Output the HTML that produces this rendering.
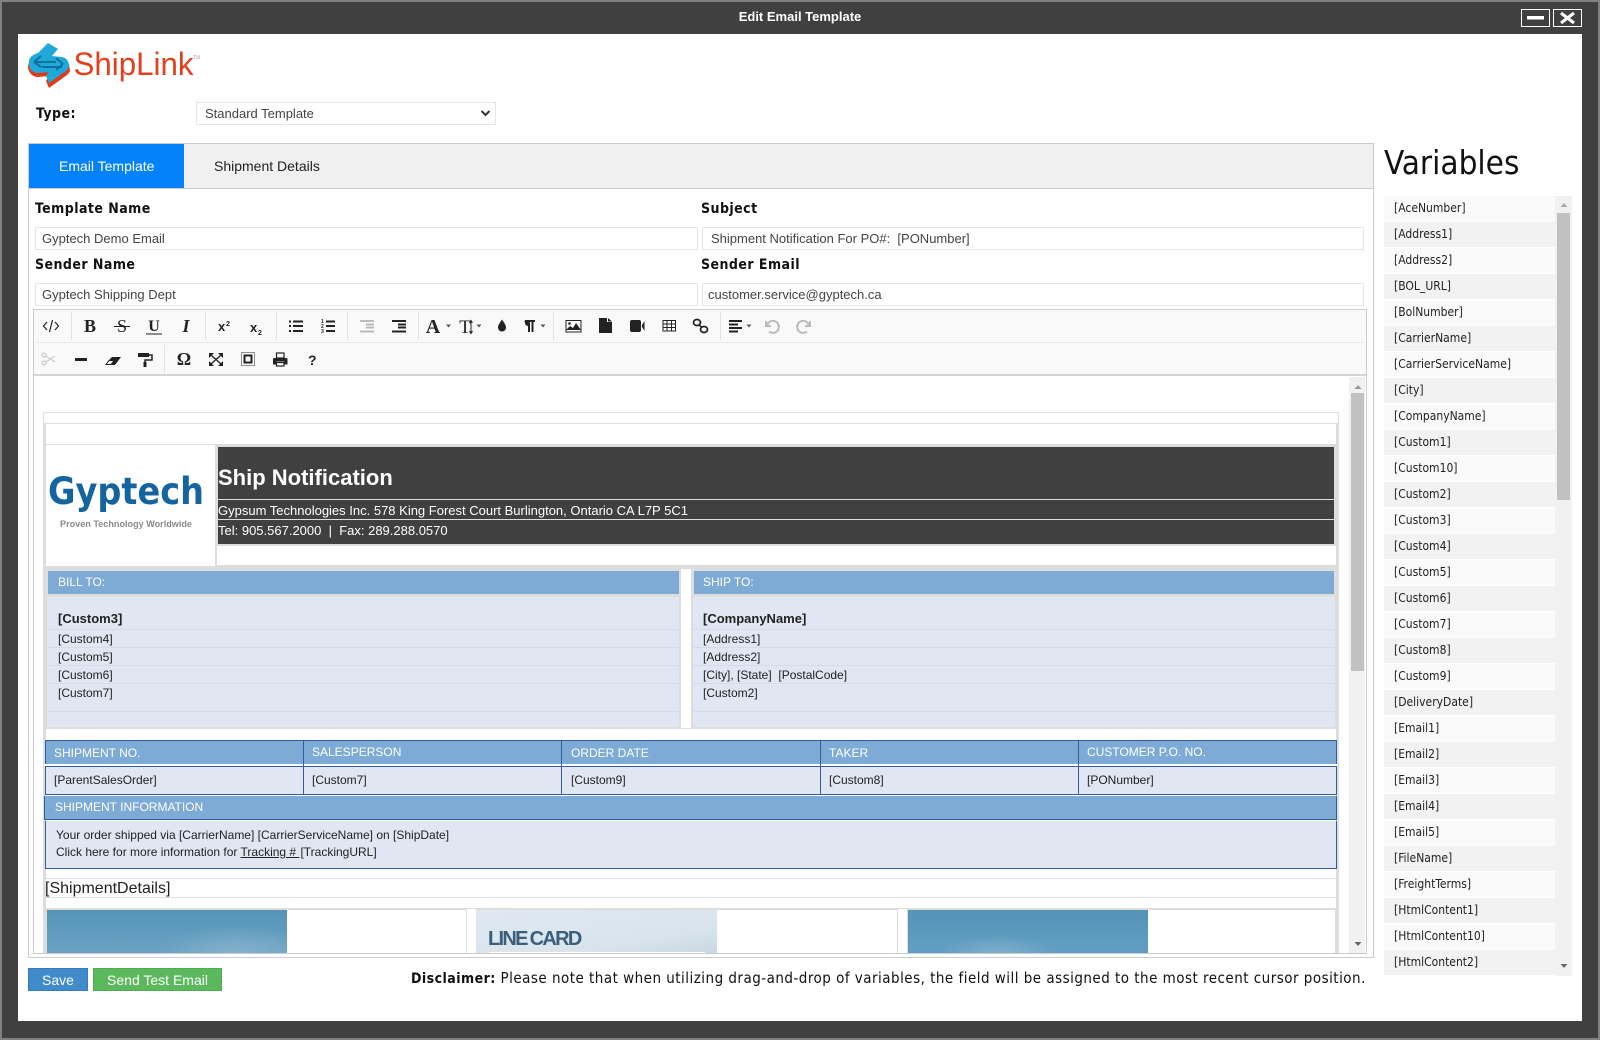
<!DOCTYPE html>
<html><head><meta charset="utf-8"><title>Edit Email Template</title>
<style>
html,body{margin:0;padding:0;width:1600px;height:1040px;overflow:hidden;background:#404040;font-family:"Liberation Sans",Arial,sans-serif;color:#222}
.a{position:absolute;box-sizing:border-box}
.t{position:absolute;white-space:nowrap;line-height:16px}
.lab{position:absolute;white-space:nowrap;font:bold 14px/18px "DejaVu Sans Condensed","DejaVu Sans",sans-serif;font-stretch:condensed;color:#111;letter-spacing:.45px}
.inp{position:absolute;box-sizing:border-box;height:23px;border:1px solid #e6e6e6;background:#fff;font-size:13px;line-height:21px;color:#444;white-space:nowrap}
.g{background:#ddd}.lb{background:#e0e7f2}.bh{background:#7dabd6}
.w{color:#fff}
.s{font-size:12px;color:#222}
.v{position:absolute;box-sizing:border-box;left:1384px;width:171px;height:25px;font:12px/25px "DejaVu Sans Condensed","DejaVu Sans",sans-serif;font-stretch:condensed;color:#222;padding-left:10px;white-space:nowrap}
</style></head><body>
<div class="a" style="left:0;top:0;width:1600px;height:1040px;border:2px solid #808080;background:#404040"></div>
<div class="t" style="left:600px;width:400px;text-align:center;top:9px;color:#fff;font-weight:bold;font-size:13px">Edit Email Template</div>
<svg class="a" style="left:1521px;top:9px" width="62" height="18"><rect x=".5" y=".5" width="28" height="17" fill="none" stroke="#fff"/><rect x="6" y="7" width="17" height="3.5" fill="#fff"/><rect x="32.5" y=".5" width="28" height="17" fill="none" stroke="#fff"/><path d="M40 4l13 10M53 4L40 14" stroke="#fff" stroke-width="3"/></svg>
<div class="a" style="left:18px;top:34px;width:1564px;height:987px;background:#fff"></div>

<svg class="a" style="left:26px;top:40px" width="180" height="52">
<path d="M2 26C2 32 6 37 12 37L23 36L20 41L23 48L41 35C43 33 44 32 44 30L43 24L3 22Z" fill="#e0391c"/>
<path d="M3 21C3 17 8 14 12 13L22 3L32 9L26 16L36 17C41 18 43 22 43 26C43 28 41 30 40 31L23 43L20 36L23 32L12 33C6 33 2 28 3 21Z" fill="#1fa9d8"/>
<path d="M8 22L15 16M8 22L15 27M8 22H30M37 24L30 18M37 24L30 30M16 27H36" fill="none" stroke="#0f6f9e" stroke-width="2"/>
<text x="47.500" y="35" font-family="Liberation Sans" font-size="32" fill="#e2401f" textLength="120" lengthAdjust="spacingAndGlyphs">ShipLink</text>
<text x="167" y="19" font-family="Liberation Sans" font-size="5" fill="#c99">TM</text>
</svg>

<div class="lab" style="left:36px;top:105px">Type:</div>
<div class="a" style="left:196px;top:102px;width:300px;height:23px;border:1px solid #e6e6e6;background:#fff"></div>
<div class="t" style="left:205px;top:106px;font-size:13px;color:#444">Standard Template</div>
<svg class="a" style="left:480px;top:109px" width="12" height="9"><path d="M1.5 2l4 4 4-4" fill="none" stroke="#333" stroke-width="2"/></svg>

<div class="a" style="left:28px;top:143px;width:1346px;height:815px;border:1px solid #ccc;background:#fff"></div>
<div class="a" style="left:29px;top:144px;width:1344px;height:45px;background:#f0f0f0;border-bottom:1px solid #ccc"></div>
<div class="a" style="left:29px;top:144px;width:155px;height:44px;background:#0482fb"></div>
<div class="t w" style="left:59px;top:158px;font-size:14px">Email Template</div>
<div class="t" style="left:214px;top:158px;font-size:14px;color:#222">Shipment Details</div>

<div class="lab" style="left:35px;top:200px">Template Name</div>
<div class="lab" style="left:701px;top:200px">Subject</div>
<div class="inp" style="left:35px;top:227px;width:663px;padding-left:6px">Gyptech Demo Email</div>
<div class="inp" style="left:702px;top:227px;width:662px;padding-left:8px">Shipment Notification For PO#:&nbsp; [PONumber]</div>
<div class="lab" style="left:35px;top:256px">Sender Name</div>
<div class="lab" style="left:701px;top:256px">Sender Email</div>
<div class="inp" style="left:35px;top:283px;width:663px;padding-left:6px">Gyptech Shipping Dept</div>
<div class="inp" style="left:702px;top:283px;width:662px;padding-left:5px">customer.service@gyptech.ca</div>

<!-- editor -->
<div class="a" style="left:33px;top:309px;width:1334px;height:645px;border:1px solid #ccc;background:#fff"></div>
<div class="a" style="left:34px;top:310px;width:1332px;height:66px;background:#f9f9f9;border-bottom:2px solid #d4d4d4"></div>
<div class="a" style="left:36px;top:342px;width:1328px;height:1px;background:#e8e8e8"></div>
<svg class="a" style="left:0;top:300px;overflow:visible" width="1000" height="80" viewBox="0 300 1000 80">
<g stroke="#e2e2e2" stroke-width="1"><path d="M71.500 312V340M205.500 312V340M276.500 312V340M347.500 312V340M418.500 312V340M553.500 312V340M720.500 312V340M164.500 345V373"/></g>
<g font-family="Liberation Serif" font-weight="bold" fill="#222" text-anchor="middle">
<text x="90" y="332" font-size="18">B</text>
<text x="122" y="332" font-size="18" font-weight="normal">S</text>
<text x="154" y="331" font-size="16">U</text>
<text x="186" y="332" font-size="18" font-style="italic">I</text>
<text x="433" y="333" font-size="20">A</text>
<text x="465" y="333" font-size="19" font-weight="normal">T</text>
<text x="184" y="365" font-size="18">Ω</text>
</g>
<path d="M114 326.500H130M146 334H162" stroke="#222" stroke-width="1"/>
<g font-family="Liberation Sans" font-weight="bold" fill="#222">
<text x="218" y="331" font-size="13">x</text><text x="226" y="326" font-size="7">2</text>
<text x="250" y="332" font-size="13">x</text><text x="258" y="335" font-size="7">2</text>
<text x="308" y="365" font-size="14">?</text>
<text x="321" y="323" font-size="5">1</text><text x="321" y="328" font-size="5">2</text><text x="321" y="333" font-size="5">3</text>
</g>
<g fill="none" stroke="#222">
<path d="M47 322l-3.500 4 3.500 4M55 322l3.500 4-3.500 4M52.500 320l-3 12" stroke-width="1.200"/>
<path d="M289 321.500h2M289 326h2M289 331h2M293 321.500h10M293 326h10M293 331h10" stroke-width="2"/>
<path d="M326 321.500h9M326 326h9M326 331h9" stroke-width="2"/>
<path d="M360 321h14M366 324.500h8M366 327.500h8M360 331.500h14" stroke="#bbb" stroke-width="2"/>
<path d="M392 321h14M398 324.500h8M398 327.500h8M392 331.500h14" stroke-width="2"/>
<path d="M471 321v12M469.500 323l1.500-2.500 1.500 2.500M469.500 331l1.500 2.500 1.500-2.500" stroke-width="1"/>
<path d="M729 321h13M729 324.500h9M729 328h13M729 331.500h9" stroke-width="2"/>
<path d="M766 321v5h5M767 325.500a6 6 0 1 1 2 6" stroke="#bbb" stroke-width="2"/>
<path d="M810 321v5h-5M809 325.500a6 6 0 1 0-2 6" stroke="#bbb" stroke-width="2"/>
<rect x="566" y="320.500" width="15" height="11.500" stroke-width="1"/>
<rect x="663" y="320.500" width="12.500" height="10.500" stroke-width="1"/><path d="M663 324h13M663 327.500h13M667 320.500v10.500M671.500 320.500v10.500" stroke-width="1"/>
<ellipse cx="697" cy="322.500" rx="3.500" ry="3" stroke-width="1.700"/><ellipse cx="704" cy="329.500" rx="3.500" ry="3" stroke-width="1.700"/><path d="M699 325l3 2.500" stroke-width="1.500"/>
<path d="M149 355h3v5h-7v3" stroke-width="1.500"/>
<path d="M211 355l10 9M221 355l-10 9" stroke-width="1.300"/>
<rect x="241.500" y="352.500" width="13" height="13" stroke-width="1" stroke-dasharray="1 1"/><rect x="244.500" y="355.500" width="7" height="7" stroke-width="2"/>
<rect x="276.500" y="353" width="7.500" height="5" stroke-width="1.200"/><rect x="276.500" y="362.500" width="7.500" height="3.500" stroke-width="1.200"/>
<g stroke="#ccc" stroke-width="1.200"><circle cx="44" cy="355" r="2"/><circle cx="44" cy="363" r="2"/><path d="M46 356l9 6M46 362l9-6"/></g>
<path d="M106 364.500l3-4h5l-3 4z" stroke-width="1"/>
</g>
<g fill="#222" stroke="none">
<path d="M566 330l4-4 3 2 3-5 5 7z"/><circle cx="569.500" cy="323.500" r="1.300"/>
<path d="M599 318h8v4h5v11h-13z"/><path d="M608 318l4 3.500h-4z"/>
<path d="M630 322a2 2 0 0 1 2-2h7a2 2 0 0 1 2 2v8a2 2 0 0 1-2 2h-7a2 2 0 0 1-2-2zM642 325l2.500-4v10l-2.500-4z"/>
<path d="M502 319.500c2 3 4 5.500 4 8a4 4 0 0 1-8 0c0-2.500 2-5 4-8z"/>
<path d="M525 320h10v2h-1.500v10h-2v-10h-1.500v10h-2v-6a3 3 0 0 1-3-3 3 3 0 0 1 0-3z"/>
<path d="M75 358h12v3H75z"/>
<path d="M109 360l3-3h9l-6 8h-4l3-5z"/>
<path d="M138 353h11v4h-11zM143.500 362h3v5h-3z"/>
<path d="M209 353h5l-5 5zM223 353v5l-5-5zM209 366v-5l5 5zM223 366h-5l5-5z"/>
<path d="M274 358h12a1.500 1.500 0 0 1 1.500 1.500v5h-3v-3h-8v3h-3.500v-5a1.500 1.500 0 0 1 1.500-1.500z"/>
<path d="M446 324.500h5l-2.500 3zM476.500 324.500h5l-2.500 3zM540.500 324.500h5l-2.500 3zM746.500 324.500h5l-2.500 3z" fill="#555"/>
</g>
</svg>

<!-- editor scrollbar -->
<div class="a" style="left:1349px;top:377px;width:16px;height:576px;background:#f1f1f1"></div>
<div class="a" style="left:1351px;top:393px;width:13px;height:278px;background:#c1c1c1"></div>
<svg class="a" style="left:1352px;top:383px" width="12" height="8"><path d="M2.500 6l3.500-4 3.500 4z" fill="#999"/></svg>
<svg class="a" style="left:1352px;top:940px" width="12" height="8"><path d="M2.500 2l3.500 4 3.500-4z" fill="#666"/></svg>

<!-- editor content -->
<div class="a" style="left:43px;top:412px;width:1296px;height:541px;border:1px solid #ddd;border-bottom:0"></div>
<div class="a" style="left:44px;top:423px;width:2px;height:530px;background:#ddd"></div>
<div class="a" style="left:44px;top:423px;width:1294px;height:1px;background:#ddd"></div>
<div class="a" style="left:1336px;top:423px;width:2px;height:530px;background:#ddd"></div>

<div class="a g" style="left:45px;top:444px;width:1292px;height:285px"></div>
<div class="a" style="left:46px;top:445px;width:169px;height:121px;background:#fff"></div>
<div class="a" style="left:216px;top:445px;width:1120px;height:121px;background:#ddd"></div>
<div class="a" style="left:218px;top:447px;width:1116px;height:97px;background:#404040"></div>
<div class="a" style="left:218px;top:499px;width:1116px;height:1px;background:#ddd"></div>
<div class="a" style="left:218px;top:519px;width:1116px;height:1px;background:#ddd"></div>
<div class="a" style="left:217px;top:546px;width:1119px;height:19px;background:#fff"></div>
<svg class="a" style="left:46px;top:470px" width="168" height="70">
<text x="2" y="34" font-family="DejaVu Sans" font-weight="bold" font-size="37" fill="#14659f" textLength="156" lengthAdjust="spacingAndGlyphs">Gyptech</text>
<text x="14" y="57" font-family="Liberation Sans" font-weight="bold" font-size="9" fill="#8a8a8a" textLength="132" lengthAdjust="spacingAndGlyphs">Proven Technology Worldwide</text>
</svg>
<div class="t w" style="left:218px;top:465px;font-size:22px;line-height:26px;font-weight:bold">Ship Notification</div>
<div class="t w" style="left:218px;top:503px;font-size:13px">Gypsum Technologies Inc. 578 King Forest Court Burlington, Ontario CA L7P 5C1</div>
<div class="t w" style="left:218px;top:523px;font-size:13px">Tel: 905.567.2000&nbsp; |&nbsp; Fax: 289.288.0570</div>

<!-- bill / ship -->
<div class="a" style="left:681px;top:569px;width:10px;height:159px;background:#fff"></div>
<div class="a bh" style="left:48px;top:571px;width:631px;height:23px"></div>
<div class="a bh" style="left:694px;top:571px;width:640px;height:23px"></div>
<div class="a lb" style="left:47px;top:597px;width:632px;height:130px"></div>
<div class="a lb" style="left:693px;top:597px;width:642px;height:130px"></div>
<div class="a" style="left:47px;top:629px;width:632px;height:1px;background:#d8dce2"></div><div class="a" style="left:693px;top:629px;width:642px;height:1px;background:#d8dce2"></div>
<div class="a" style="left:47px;top:647px;width:632px;height:1px;background:#d8dce2"></div><div class="a" style="left:693px;top:647px;width:642px;height:1px;background:#d8dce2"></div>
<div class="a" style="left:47px;top:665px;width:632px;height:1px;background:#d8dce2"></div><div class="a" style="left:693px;top:665px;width:642px;height:1px;background:#d8dce2"></div>
<div class="a" style="left:47px;top:683px;width:632px;height:1px;background:#d8dce2"></div><div class="a" style="left:693px;top:683px;width:642px;height:1px;background:#d8dce2"></div>
<div class="a" style="left:47px;top:711px;width:632px;height:1px;background:#d8dce2"></div><div class="a" style="left:693px;top:711px;width:642px;height:1px;background:#d8dce2"></div>
<div class="t s w" style="left:58px;top:574px;color:#fff">BILL TO:</div>
<div class="t s w" style="left:703px;top:574px;color:#fff">SHIP TO:</div>
<div class="t" style="left:58px;top:611px;font-size:13px;font-weight:bold;color:#222">[Custom3]</div>
<div class="t" style="left:703px;top:611px;font-size:13px;font-weight:bold;color:#222">[CompanyName]</div>
<div class="t s" style="left:58px;top:631px">[Custom4]</div><div class="t s" style="left:703px;top:631px">[Address1]</div>
<div class="t s" style="left:58px;top:649px">[Custom5]</div><div class="t s" style="left:703px;top:649px">[Address2]</div>
<div class="t s" style="left:58px;top:667px">[Custom6]</div><div class="t s" style="left:703px;top:667px">[City], [State]&nbsp; [PostalCode]</div>
<div class="t s" style="left:58px;top:685px">[Custom7]</div><div class="t s" style="left:703px;top:685px">[Custom2]</div>

<!-- shipment table -->
<div class="a" style="left:45px;top:740px;width:1292px;height:55px;background:#2f5f9e"></div>
<div class="a bh" style="left:46px;top:741px;width:1290px;height:23px"></div>
<div class="a" style="left:44px;top:764px;width:1293px;height:2px;background:#fff"></div>
<div class="a lb" style="left:46px;top:767px;width:1290px;height:27px"></div>
<div class="a" style="left:45px;top:766px;width:1292px;height:1px;background:#2f5f9e"></div>
<div class="a" style="left:303px;top:740px;width:1px;height:55px;background:#2f5f9e"></div>
<div class="a" style="left:561px;top:740px;width:1px;height:55px;background:#2f5f9e"></div>
<div class="a" style="left:820px;top:740px;width:1px;height:55px;background:#2f5f9e"></div>
<div class="a" style="left:1078px;top:740px;width:1px;height:55px;background:#2f5f9e"></div>
<div class="t s" style="left:54px;top:745px;color:#fff">SHIPMENT NO.</div>
<div class="t s" style="left:312px;top:744px;color:#fff">SALESPERSON</div>
<div class="t s" style="left:571px;top:745px;color:#fff">ORDER DATE</div>
<div class="t s" style="left:829px;top:745px;color:#fff">TAKER</div>
<div class="t s" style="left:1087px;top:744px;color:#fff">CUSTOMER P.O. NO.</div>
<div class="t s" style="left:54px;top:772px">[ParentSalesOrder]</div>
<div class="t s" style="left:312px;top:772px">[Custom7]</div>
<div class="t s" style="left:571px;top:772px">[Custom9]</div>
<div class="t s" style="left:829px;top:772px">[Custom8]</div>
<div class="t s" style="left:1087px;top:772px">[PONumber]</div>

<div class="a bh" style="left:44px;top:796px;width:1293px;height:24px;border:1px solid #2f5f9e;border-top:0;border-right:1px solid #2f5f9e"></div>
<div class="t s" style="left:55px;top:799px;color:#fff">SHIPMENT INFORMATION</div>
<div class="a lb" style="left:45px;top:821px;width:1292px;height:48px;border:1px solid #2f5f9e;border-top:0"></div>
<div class="t s" style="left:56px;top:827px">Your order shipped via [CarrierName] [CarrierServiceName] on [ShipDate]</div>
<div class="t s" style="left:56px;top:844px">Click here for more information for <span style="text-decoration:underline">Tracking #&nbsp;</span><span style="margin-left:1px">[TrackingURL]</span></div>

<div class="a" style="left:45px;top:878px;width:1292px;height:1px;background:#ddd"></div>
<div class="a" style="left:45px;top:897px;width:1292px;height:1px;background:#ddd"></div>
<div class="t" style="left:45px;top:879px;font-size:16px;line-height:20px;color:#222">[ShipmentDetails]</div>

<!-- image row -->
<div class="a" style="left:45px;top:908px;width:1292px;height:45px;background:#ddd"></div>
<div class="a" style="left:47px;top:910px;width:419px;height:43px;background:#fff"></div>
<div class="a" style="left:467px;top:909px;width:9px;height:44px;background:#fff"></div>
<div class="a" style="left:476px;top:910px;width:421px;height:43px;background:#fff"></div>
<div class="a" style="left:898px;top:909px;width:9px;height:44px;background:#fff"></div>
<div class="a" style="left:908px;top:910px;width:427px;height:43px;background:#fff"></div>
<div class="a" style="left:47px;top:910px;width:240px;height:43px;background:radial-gradient(ellipse 80px 30px at 190px 45px,#86b2cc,rgba(134,178,204,0)),linear-gradient(180deg,#5494b8,#6aa2c3)"></div>
<div class="a" style="left:476px;top:910px;width:241px;height:43px;background:linear-gradient(170deg,#dfe8f0,#d8e4ec 70%,#c8d8e2)"></div>
<div class="a" style="left:489px;top:952px;width:216px;height:1px;background:#fff"></div>
<div class="t" style="left:488px;top:927px;font-size:20px;line-height:24px;font-weight:bold;color:#3a5f7d;letter-spacing:-1.700px;word-spacing:-1px">LINE CARD</div>
<div class="a" style="left:908px;top:910px;width:240px;height:43px;background:radial-gradient(ellipse 60px 20px at 90px 45px,#7fb0cd,rgba(127,176,205,0)),linear-gradient(180deg,#5494b8,#629fc2)"></div>

<!-- footer -->
<div class="a" style="left:28px;top:968px;width:60px;height:23px;background:#428bca;border:1px solid #357ebd"></div>
<div class="t w" style="left:28px;width:60px;text-align:center;top:972px;font-size:14px">Save</div>
<div class="a" style="left:93px;top:968px;width:129px;height:23px;background:#5cb85c;border:1px solid #4cae4c"></div>
<div class="t w" style="left:93px;width:129px;text-align:center;top:972px;font-size:14px">Send Test Email</div>
<div class="t" style="left:411px;top:969px;font:15px/18px 'DejaVu Sans Condensed','DejaVu Sans',sans-serif;font-stretch:condensed;color:#111;letter-spacing:.48px"><b style="font-size:14px;letter-spacing:.45px">Disclaimer:</b> Please note that when utilizing drag-and-drop of variables, the field will be assigned to the most recent cursor position.</div>

<!-- variables -->
<div class="t" style="left:1384px;top:143px;font:33px/40px 'DejaVu Sans Condensed','DejaVu Sans',sans-serif;font-stretch:condensed;color:#111">Variables</div>
<div class="a" style="left:1555px;top:196px;width:17px;height:780px;background:#f1f1f1"></div>
<div class="a" style="left:1557px;top:213px;width:13px;height:287px;background:#c1c1c1"></div>
<svg class="a" style="left:1558px;top:201px" width="12" height="8"><path d="M2.500 6l3.500-4 3.500 4z" fill="#aaa"/></svg>
<svg class="a" style="left:1558px;top:962px" width="12" height="8"><path d="M2.500 2l3.500 4 3.500-4z" fill="#666"/></svg>
<div class="v" style="top:196px;background:#fafafa">[AceNumber]</div>
<div class="v" style="top:222px;background:#f2f2f2">[Address1]</div>
<div class="v" style="top:248px;background:#fafafa">[Address2]</div>
<div class="v" style="top:274px;background:#f2f2f2">[BOL_URL]</div>
<div class="v" style="top:300px;background:#fafafa">[BolNumber]</div>
<div class="v" style="top:326px;background:#f2f2f2">[CarrierName]</div>
<div class="v" style="top:352px;background:#fafafa">[CarrierServiceName]</div>
<div class="v" style="top:378px;background:#f2f2f2">[City]</div>
<div class="v" style="top:404px;background:#fafafa">[CompanyName]</div>
<div class="v" style="top:430px;background:#f2f2f2">[Custom1]</div>
<div class="v" style="top:456px;background:#fafafa">[Custom10]</div>
<div class="v" style="top:482px;background:#f2f2f2">[Custom2]</div>
<div class="v" style="top:508px;background:#fafafa">[Custom3]</div>
<div class="v" style="top:534px;background:#f2f2f2">[Custom4]</div>
<div class="v" style="top:560px;background:#fafafa">[Custom5]</div>
<div class="v" style="top:586px;background:#f2f2f2">[Custom6]</div>
<div class="v" style="top:612px;background:#fafafa">[Custom7]</div>
<div class="v" style="top:638px;background:#f2f2f2">[Custom8]</div>
<div class="v" style="top:664px;background:#fafafa">[Custom9]</div>
<div class="v" style="top:690px;background:#f2f2f2">[DeliveryDate]</div>
<div class="v" style="top:716px;background:#fafafa">[Email1]</div>
<div class="v" style="top:742px;background:#f2f2f2">[Email2]</div>
<div class="v" style="top:768px;background:#fafafa">[Email3]</div>
<div class="v" style="top:794px;background:#f2f2f2">[Email4]</div>
<div class="v" style="top:820px;background:#fafafa">[Email5]</div>
<div class="v" style="top:846px;background:#f2f2f2">[FileName]</div>
<div class="v" style="top:872px;background:#fafafa">[FreightTerms]</div>
<div class="v" style="top:898px;background:#f2f2f2">[HtmlContent1]</div>
<div class="v" style="top:924px;background:#fafafa">[HtmlContent10]</div>
<div class="v" style="top:950px;background:#f2f2f2">[HtmlContent2]</div>
</body></html>
